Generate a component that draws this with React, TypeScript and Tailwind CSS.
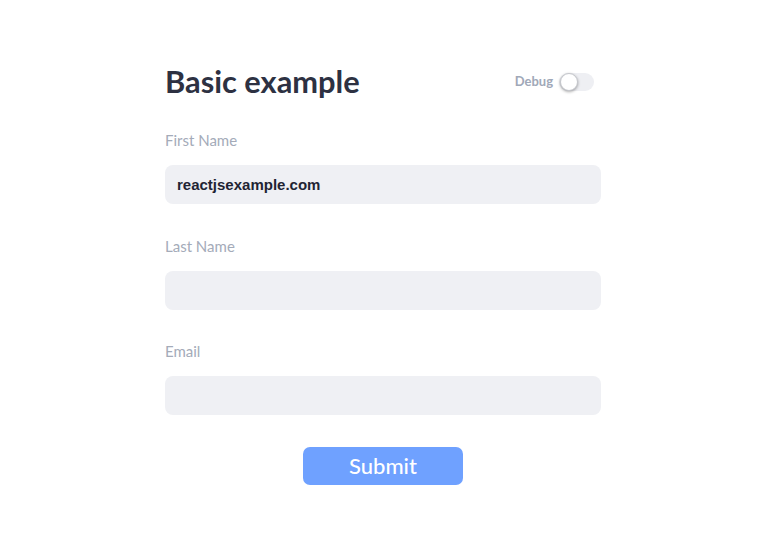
import React from "react";

const fields = [
  { label: "First Name", value: "reactjsexample.com" },
  { label: "Last Name", value: "" },
  { label: "Email", value: "" },
];

export default function App() {
  return (
    <div className="min-h-[535px] w-full bg-white font-['Lato',sans-serif]">
      <div className="ml-[165px] w-[436px] pt-[62px]">
        <div className="flex items-center justify-between">
          <h1 className="text-[30.8px] font-bold leading-[40px] text-[#2d3142]">Basic example</h1>
          <div className="mr-[7px] flex items-center gap-[6px]">
            <span className="text-[13px] font-bold text-[#a0a8b8]">Debug</span>
            <div className="relative h-[18px] w-[35px] rounded-full bg-[#eeeff3]">
              <div className="absolute left-px top-0 h-[18px] w-[18px] rounded-full border border-[#c5c7cc] bg-white shadow-[0_1px_3px_rgba(0,0,0,0.35)]" />
            </div>
          </div>
        </div>

        <form className="mt-[27px] flex flex-col">
          {fields.map((f) => (
            <div key={f.label} className="mb-[30.5px] flex flex-col">
              <label className="text-[15px] leading-[22px] text-[#a4abb9]">{f.label}</label>
              <input
                readOnly
                value={f.value}
                className="mt-[14px] h-[39px] rounded-[8px] bg-[#eff0f4] px-[12px] font-['Liberation_Sans',sans-serif] text-[15px] font-bold text-[#1f2433] outline-none"
              />
            </div>
          ))}
          <div className="mt-[1.5px] flex justify-center">
            <button
              type="button"
              className="h-[38px] w-[160px] rounded-[7px] bg-[#6fa1ff] text-[22px] font-medium leading-none text-white"
            >
              Submit
            </button>
          </div>
        </form>
      </div>
    </div>
  );
}
